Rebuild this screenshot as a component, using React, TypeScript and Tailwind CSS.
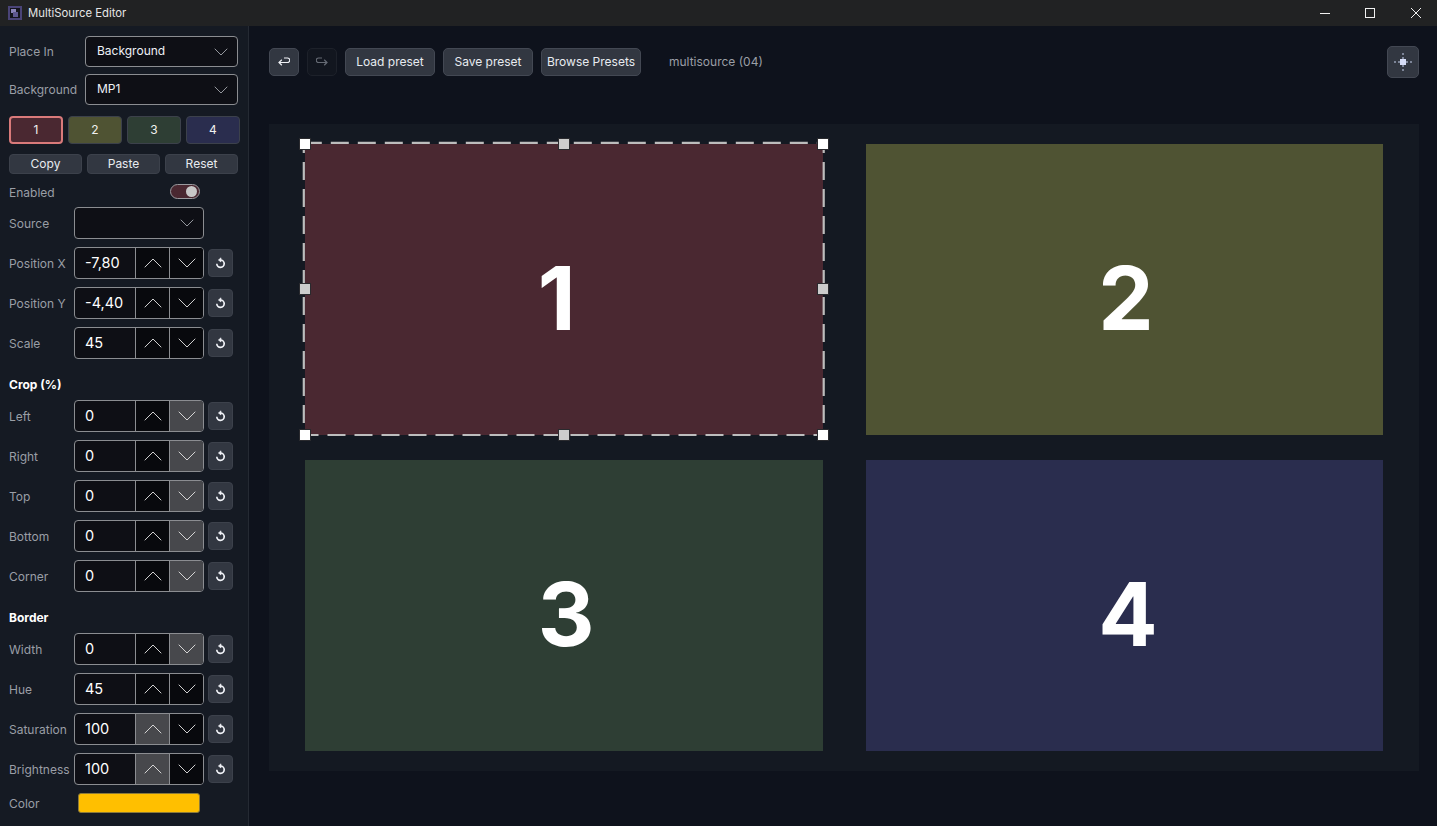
import { ChevronDown, ChevronUp } from "lucide-react";

const font = { fontFamily: "Inter, 'Noto Sans', sans-serif" };

type StepperRow = {
  label: string;
  value: string;
  upOff?: boolean;
  downOff?: boolean;
};

const TILES = [
  { n: "1", bg: "bg-[#4a2831]" },
  { n: "2", bg: "bg-[#4f5333]" },
  { n: "3", bg: "bg-[#2e3e34]" },
  { n: "4", bg: "bg-[#2a2d4e]" },
];

const POSITION: StepperRow[] = [
  { label: "Position X", value: "-7,80" },
  { label: "Position Y", value: "-4,40" },
  { label: "Scale", value: "45" },
];

const CROP: StepperRow[] = [
  { label: "Left", value: "0", downOff: true },
  { label: "Right", value: "0", downOff: true },
  { label: "Top", value: "0", downOff: true },
  { label: "Bottom", value: "0", downOff: true },
  { label: "Corner", value: "0", downOff: true },
];

const BORDER: StepperRow[] = [
  { label: "Width", value: "0", downOff: true },
  { label: "Hue", value: "45" },
  { label: "Saturation", value: "100", upOff: true },
  { label: "Brightness", value: "100", upOff: true },
];

function ResetIcon() {
  return (
    <svg width="11" height="12" viewBox="0 0 11 12" fill="none" stroke="#f1f3f8" strokeWidth="1.7">
      <path d="M5.4 3 A3.7 3.7 0 1 1 1.8 6.8" />
      <path d="M6 0.8 L3.4 3 L6 5 Z" strokeWidth="0.6" fill="#f1f3f8" />
    </svg>
  );
}

function Stepper({ label, value, upOff, downOff }: StepperRow) {
  return (
    <div className="flex h-8 items-center">
      <span className="w-[65px] shrink-0 whitespace-nowrap pt-[2px] text-[12px] text-[#9a9ea6]">{label}</span>
      <div className="flex h-8 w-[130px] overflow-hidden rounded-[4px] border border-[#8b8d91] bg-[#0e0f15]">
        <span className="flex w-[61px] items-center border-r border-[#8b8d91] pl-[10px] text-[14.5px] text-white">
          {value}
        </span>
        <span className={`flex w-[34px] items-center justify-center border-r border-[#8b8d91] ${upOff ? "bg-[#47484c]" : "bg-[#08090d]"}`}>
          <ChevronUp size={32} strokeWidth={0.7} className="shrink-0 text-[#e0e0e0]" />
        </span>
        <span className={`flex flex-1 items-center justify-center ${downOff ? "bg-[#47484c]" : "bg-[#08090d]"}`}>
          <ChevronDown size={32} strokeWidth={0.7} className="shrink-0 text-[#e0e0e0]" />
        </span>
      </div>
      <button className="ml-1 flex h-[28px] w-[25px] items-center justify-center rounded-[4px] border border-[#3c414b] bg-[#323741]">
        <ResetIcon />
      </button>
    </div>
  );
}

function SelectBox({ value, className }: { value: string; className: string }) {
  return (
    <div className={`flex items-center justify-between rounded-[4px] border border-[#8b8d91] bg-[#0e0f15] pl-[11px] pr-[4px] ${className}`}>
      <span className="pb-[1px] text-[12px] text-[#eef1f7]">{value}</span>
      <ChevronDown size={24} strokeWidth={0.8} className="text-[#b8bac0]" />
    </div>
  );
}

function SmallButton({ children }: { children: string }) {
  return (
    <button className="flex h-5 w-[73px] items-center justify-center rounded-[4px] border border-[#3c414b] bg-[#323741] text-[12px] text-[#e8ebf0]">
      {children}
    </button>
  );
}

function ToolButton({ children, className }: { children: string; className: string }) {
  return (
    <button className={`flex h-7 items-center justify-center rounded-[5px] border border-[#434853] bg-[#323741] text-[12px] text-[#e8ebf0] ${className}`}>
      {children}
    </button>
  );
}

function Handle({ className }: { className: string }) {
  return <span className={`absolute h-[12px] w-[12px] border border-[#2a2a2e] ${className}`} />;
}

// dashed marquee round the selected tile, drawn 2px outside it
function Marquee() {
  const dash = { stroke: "#bdbdbd", strokeWidth: 2.2, strokeDasharray: "18 9" };
  return (
    <svg className="absolute -left-[4px] -top-[4px] overflow-visible" width="526" height="299" fill="none">
      <path d="M2.8 2.8 H522.7" {...dash} />
      <path d="M2.8 295 H522.7" {...dash} strokeDashoffset={3.3} />
      <path d="M2.8 2.8 V295" {...dash} strokeDashoffset={7.7} />
      <path d="M522.7 2.8 V295" {...dash} strokeDashoffset={7.7} />
    </svg>
  );
}

export default function App() {
  return (
    <div className="flex h-[826px] w-[1437px] flex-col overflow-hidden bg-[#0e121c]" style={font}>
      {/* title bar */}
      <div className="flex h-[26px] shrink-0 items-center bg-[#212223] pl-2">
        <svg width="14" height="14" viewBox="0 0 14 14">
          <rect width="14" height="14" fill="#4a4478" />
          <rect x="2" y="2" width="10" height="10" fill="#14141c" />
          <rect x="3" y="3" width="5" height="4" fill="#8a84b8" />
          <rect x="5" y="6" width="5" height="5" fill="#5e5890" />
        </svg>
        <span className="ml-[6px] text-[11.3px] text-[#e6e6e6]">MultiSource Editor</span>
        <div className="ml-auto flex items-center">
          <span className="flex w-[40px] justify-center">
            <svg width="10" height="10" viewBox="0 0 10 10" stroke="#f0f0f0" strokeWidth="1"><path d="M0 5.5 H10" /></svg>
          </span>
          <span className="flex w-[50px] justify-center">
            <svg width="10" height="10" viewBox="0 0 10 10" fill="none" stroke="#f0f0f0" strokeWidth="1"><rect x="0.5" y="0.5" width="9" height="9" /></svg>
          </span>
          <span className="flex w-[42px] justify-center">
            <svg width="10" height="10" viewBox="0 0 10 10" stroke="#f0f0f0" strokeWidth="1"><path d="M0 0 L10 10 M10 0 L0 10" /></svg>
          </span>
        </div>
      </div>

      <div className="flex min-h-0 flex-1">
        {/* sidebar */}
        <aside className="flex w-[249px] shrink-0 flex-col border-r border-[#252a33] bg-[#151a23] pl-[9px] pt-[10px]">
          <div className="flex h-[31px] items-center">
            <span className="w-[76px] pt-[1px] text-[12px] text-[#9a9ea6]">Place In</span>
            <SelectBox value="Background" className="h-[31px] w-[153px]" />
          </div>
          <div className="mt-[7px] flex h-[31px] items-center">
            <span className="w-[76px] pt-[1px] text-[12px] text-[#9a9ea6]">Background</span>
            <SelectBox value="MP1" className="h-[31px] w-[153px]" />
          </div>
          <div className="mt-[11px] flex gap-[5px]">
            {TILES.map((t, i) => (
              <button
                key={t.n}
                className={`flex h-7 w-[54px] items-center justify-center rounded-[4px] border text-[12px] text-[#f0f0f0] ${t.bg} ${i === 0 ? "border-2 border-[#d97a7a]" : "border-[#3c414b]"}`}
              >
                {t.n}
              </button>
            ))}
          </div>
          <div className="mt-[10px] flex gap-[5px]">
            <SmallButton>Copy</SmallButton>
            <SmallButton>Paste</SmallButton>
            <SmallButton>Reset</SmallButton>
          </div>
          <div className="mt-[9px] flex h-[17px] items-center">
            <span className="w-[161px] pt-[3px] text-[12px] text-[#9a9ea6]">Enabled</span>
            <span className="flex h-[15px] w-[30px] items-center justify-end rounded-full border border-[#9a9a9e] bg-[#4a2831] pr-[2px]">
              <span className="h-[11px] w-[11px] rounded-full bg-[#c8c8c8]" />
            </span>
          </div>
          <div className="mt-[7px] flex h-8 items-center">
            <span className="w-[65px] pt-[2px] text-[12px] text-[#9a9ea6]">Source</span>
            <SelectBox value="" className="h-8 w-[130px]" />
          </div>
          <div className="mt-2 flex flex-col gap-2">
            {POSITION.map((r) => <Stepper key={r.label} {...r} />)}
          </div>
          <h3 className="mt-[18px] h-[16px] text-[12px] font-bold leading-[16px] text-white">Crop (%)</h3>
          <div className="mt-[7px] flex flex-col gap-2">
            {CROP.map((r) => <Stepper key={r.label} {...r} />)}
          </div>
          <h3 className="mt-[18px] h-[16px] text-[12px] font-bold leading-[16px] text-white">Border</h3>
          <div className="mt-[7px] flex flex-col gap-2">
            {BORDER.map((r) => <Stepper key={r.label} {...r} />)}
          </div>
          <div className="mt-[8px] flex h-5 items-center">
            <span className="w-[69px] pt-[1px] text-[12px] text-[#9a9ea6]">Color</span>
            <span className="h-5 w-[122px] rounded-[3px] border border-[#8b7a3a] bg-[#ffbf00]" />
          </div>
        </aside>

        {/* main */}
        <main className="flex flex-1 flex-col pl-5 pr-[18px]">
          <div className="mt-[22px] flex h-7 items-center">
            <button className="mr-2 flex h-7 w-[30px] items-center justify-center rounded-[5px] border border-[#434853] bg-[#323741]">
              <svg width="12" height="10" viewBox="0 0 12 10" fill="none" stroke="#f0f2f6" strokeWidth="1.2">
                <path d="M6 1 H9.5 A2.2 2.2 0 0 1 9.5 5.5 H1 M3.8 2.8 L1 5.5 L3.8 8.2" />
              </svg>
            </button>
            <button className="mr-2 flex h-7 w-[30px] items-center justify-center rounded-[5px] border border-[#1d212a] bg-[#12161f]">
              <svg width="12" height="10" viewBox="0 0 12 10" fill="none" stroke="#666b75" strokeWidth="1.2">
                <path d="M6 1 H2.5 A2.2 2.2 0 0 0 2.5 5.5 H11 M8.2 2.8 L11 5.5 L8.2 8.2" />
              </svg>
            </button>
            <ToolButton className="w-[90px]">Load preset</ToolButton>
            <ToolButton className="ml-2 w-[90px]">Save preset</ToolButton>
            <ToolButton className="ml-2 w-[100px]">Browse Presets</ToolButton>
            <span className="ml-7 text-[12px] text-[#9a9ea6]">multisource (04)</span>
            <button className="ml-auto flex h-8 w-8 items-center justify-center rounded-[5px] border border-[#434853] bg-[#323741]">
              <svg width="18" height="18" viewBox="0 0 18 18">
                <rect x="6" y="6" width="6" height="6" fill="#d5dcf5" />
                <path d="M8 0h2v2H8zM8 4h2v2H8zM8 12h2v2H8zM8 16h2v2H8zM0 8h2v2H0zM4 8h2v2H4zM12 8h2v2h-2zM16 8h2v2h-2z" fill="#7d8598" />
              </svg>
            </button>
          </div>

          {/* canvas */}
          <div className="mt-[48px] grid h-[647px] w-[1150px] grid-cols-[517.5px_517.5px] grid-rows-[291px_291px] gap-x-[43px] gap-y-[25px] bg-[#141922] pl-[36px] pt-[20px]">
            {TILES.map((t, i) => (
              <div key={t.n} className={`relative flex items-center justify-center ${t.bg}`}>
                <span className="w-[52px] pt-[17px] text-[88px] font-bold leading-none text-white">{t.n}</span>
                {i === 0 && (
                  <>
                    <Marquee />
                    <Handle className="-left-[6px] -top-[6px] bg-white" />
                    <Handle className="left-[253px] -top-[6px] bg-[#cccccc]" />
                    <Handle className="-right-[6px] -top-[6px] bg-white" />
                    <Handle className="-left-[6px] top-[139px] bg-[#cccccc]" />
                    <Handle className="-right-[6px] top-[139px] bg-[#cccccc]" />
                    <Handle className="-left-[6px] -bottom-[6px] bg-white" />
                    <Handle className="left-[253px] -bottom-[6px] bg-[#cccccc]" />
                    <Handle className="-right-[6px] -bottom-[6px] bg-white" />
                  </>
                )}
              </div>
            ))}
          </div>
        </main>
      </div>
    </div>
  );
}
